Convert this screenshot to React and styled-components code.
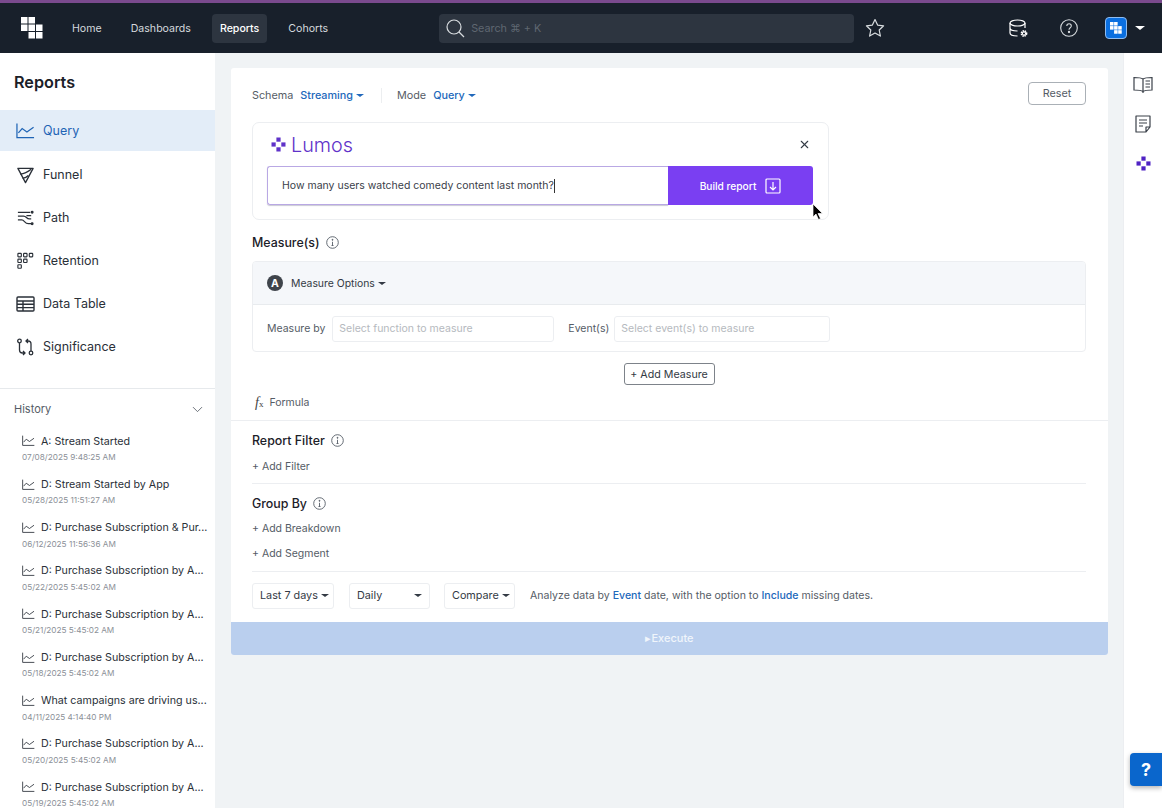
import React from 'react';
import styled, { createGlobalStyle } from 'styled-components';
import { ChevronDown, X } from 'lucide-react';

const GlobalStyle = createGlobalStyle`
  html, body { margin: 0; padding: 0; height: 100%; overflow: hidden; }
  body { font-family: Inter, "Liberation Sans", sans-serif; color: #1d2530; }
  * { box-sizing: border-box; }
`;

const history = [
  ['A: Stream Started', '07/08/2025 9:48:25 AM'],
  ['D: Stream Started by App', '05/28/2025 11:51:27 AM'],
  ['D: Purchase Subscription & Pur...', '06/12/2025 11:56:36 AM'],
  ['D: Purchase Subscription by A...', '05/22/2025 5:45:02 AM'],
  ['D: Purchase Subscription by A...', '05/21/2025 5:45:02 AM'],
  ['D: Purchase Subscription by A...', '05/18/2025 5:45:02 AM'],
  ['What campaigns are driving us...', '04/11/2025 4:14:40 PM'],
  ['D: Purchase Subscription by A...', '05/20/2025 5:45:02 AM'],
  ['D: Purchase Subscription by A...', '05/19/2025 5:45:02 AM'],
];

const Line = ({ size = 20 }) => (
  <svg width={size} height={size * 0.85} viewBox="0 0 20 17" fill="none" stroke="currentColor" strokeWidth="1.3">
    <path d="M1 1v15h18" />
    <path d="M2.5 11l4-4.5 5 3.5 7-5" />
  </svg>
);

const Funnel = () => (
  <svg width="20" height="20" viewBox="0 0 20 20" fill="none" stroke="currentColor" strokeWidth="1.4">
    <path d="M2 3h16l-8 15z" strokeLinejoin="round" />
    <path d="M4.5 9c4-.3 8-2.2 11.5-5M7 13.5c2.5-.5 4.5-1.5 6-3" />
  </svg>
);

const PathIcon = () => (
  <svg width="20" height="20" viewBox="0 0 20 20" fill="none" stroke="currentColor" strokeWidth="1.3">
    <path d="M2 4h13M2 8h6c3 0 3 3 6 3h2M2 12h4c3 0 3 4 7 4h3M11 7.5h5" />
    <circle cx="17" cy="4" r=".9" fill="currentColor" />
    <circle cx="17" cy="16" r=".9" fill="currentColor" />
  </svg>
);

const Retention = () => (
  <svg width="20" height="20" viewBox="0 0 20 20" fill="none" stroke="currentColor" strokeWidth="1.2">
    {[[2, 2], [8, 2], [14, 2], [2, 8], [8, 8], [2, 14]].map(([x, y]) => (
      <rect key={`${x}-${y}`} x={x} y={y} width="3.6" height="3.6" rx=".6" />
    ))}
  </svg>
);

const TableIcon = () => (
  <svg width="19" height="16" viewBox="0 0 19 16" fill="none" stroke="currentColor" strokeWidth="1.4">
    <rect x="1" y="1" width="17" height="14" rx="1" />
    <path d="M1 5h17M1 8.3h17M1 11.6h17M7 5v10" />
  </svg>
);

const Significance = () => (
  <svg width="18" height="20" viewBox="0 0 18 20" fill="none" stroke="currentColor" strokeWidth="1.3">
    <circle cx="3" cy="4" r="1.8" />
    <circle cx="14.5" cy="16" r="1.8" />
    <path d="M3 6v7c0 2 1 3 3 3h2M6.5 14l2 2-2 2M14.500 14V7c0-2-1-3-3-3h-2M11.500 2l-2 2 2 2" />
  </svg>
);

const Cubes = ({ color = '#fff', size = 22 }) => (
  <svg width={size} height={size} viewBox="0 0 22 22" fill={color}>
    <rect x="0" y="0" width="6.5" height="6.5" />
    <rect x="7.5" y="0" width="6.5" height="6.5" />
    <rect x="0" y="7.5" width="6.5" height="6.5" />
    <rect x="7.5" y="7.5" width="6.5" height="6.5" />
    <rect x="15" y="7.5" width="6.5" height="6.5" />
    <rect x="7.5" y="15" width="6.5" height="6.5" />
    <rect x="15" y="15" width="6.5" height="6.5" />
  </svg>
);

const LumosMark = ({ size = 15, color = '#5f32c9' }) => (
  <svg width={size} height={size} viewBox="0 0 15 15" fill={color}>
    <rect x="5.4" y="0.5" width="4.2" height="4.2" />
    <rect x="0.5" y="5.4" width="4.2" height="4.2" />
    <rect x="10.3" y="5.4" width="4.2" height="4.2" />
    <rect x="5.4" y="10.3" width="4.2" height="4.2" />
  </svg>
);

const Info = () => (
  <svg width="13" height="13" viewBox="0 0 13 13" fill="none" stroke="#555c66" strokeWidth=".9">
    <circle cx="6.5" cy="6.5" r="5.8" />
    <path d="M6.5 5.8v3.7M5.5 9.5h2" />
    <circle cx="6.5" cy="3.8" r=".5" fill="#555c66" />
  </svg>
);

const DataGear = () => (
  <svg width="19" height="19" viewBox="0 0 19 19" fill="none" stroke="#fff" strokeWidth="1.2">
    <ellipse cx="8.5" cy="4" rx="7.5" ry="3" />
    <path d="M1 4v10c0 1.7 3.4 3 7.5 3M16 4v5M1 9c0 1.7 3.4 3 7.5 3" />
    <circle cx="15" cy="14.5" r="2.6" strokeWidth="1.6" strokeDasharray="1.4 .7" />
    <circle cx="15" cy="14.5" r="1.6" strokeWidth="1.1" />
  </svg>
);

const Page = styled.div`
  position: relative;
  height: 808px;
  display: flex;
  flex-direction: column;
  background: #f0f3f5;
  overflow: hidden;
`;

const TopBar = styled.header`
  height: 53px;
  flex: none;
  display: flex;
  align-items: center;
  padding-left: 21px;
  background: #18202b;
  border-top: 3px solid #7a4a8e;
`;

const Nav = styled.nav`
  display: flex;
  align-items: center;
  margin-left: 21px;
  gap: 8px;
`;

const NavLink = styled.a`
  height: 29px;
  display: flex;
  align-items: center;
  padding: 0 8px;
  margin-right: ${(p) => p.$gap || 0}px;
  border-radius: 4px;
  font-size: 10.6px;
  font-weight: ${(p) => (p.$active ? 500 : 400)};
  color: ${(p) => (p.$active ? '#fff' : '#d4d8dd')};
  background: ${(p) => (p.$active ? '#2d3540' : 'transparent')};
`;

const Search = styled.div`
  width: 415px;
  height: 29px;
  margin-left: 103px;
  display: flex;
  align-items: center;
  gap: 6px;
  padding-left: 6px;
  background: #2d3540;
  border-radius: 4px;
  font-size: 10.8px;
  color: #5f6771;
`;

const StarWrap = styled.div`
  display: flex;
  margin-left: 11px;
`;

const TopRight = styled.div`
  margin-left: auto;
  display: flex;
  align-items: center;
  padding-right: 17px;
`;

const HelpRound = styled.svg`
  margin-left: 32px;
`;

const Avatar = styled.div`
  width: 22px;
  height: 22px;
  margin-left: 27px;
  display: flex;
  align-items: center;
  justify-content: center;
  background: #0a6fe0;
  border: 1px solid #8fbcf0;
  border-radius: 4px;
`;

const Caret = styled.span`
  display: inline-block;
  width: 0;
  height: 0;
  flex: none;
  margin-left: ${(p) => p.$ml ?? 3}px;
  border-left: ${(p) => p.$s || 4}px solid transparent;
  border-right: ${(p) => p.$s || 4}px solid transparent;
  border-top: ${(p) => (p.$s || 4) * 0.85}px solid ${(p) => p.$color || 'currentColor'};
`;

const Body = styled.div`
  flex: 1;
  min-height: 0;
  display: flex;
`;

const Sidebar = styled.aside`
  width: 215px;
  flex: none;
  background: #fff;
  overflow: hidden;
`;

const SideTitle = styled.h2`
  margin: 0;
  padding: 19px 0 0 14px;
  height: 57px;
  font-size: 16.2px;
  line-height: 20px;
  font-weight: 600;
  color: #1b2028;
`;

const SideMenu = styled.div`
  padding-bottom: 20px;
  border-bottom: 1px solid #e6e9ec;
`;

const SideItem = styled.div`
  height: ${(p) => (p.$active ? 41 : 43)}px;
  margin-bottom: ${(p) => (p.$active ? 2 : 0)}px;
  display: flex;
  align-items: center;
  gap: 8px;
  padding-left: 16px;
  font-size: 12.5px;
  color: ${(p) => (p.$active ? '#1f64b5' : '#2a3038')};
  background: ${(p) => (p.$active ? '#e3edf8' : 'transparent')};
  & > svg { width: 19px; flex: none; }
`;

const HistoryHead = styled.div`
  display: flex;
  justify-content: space-between;
  align-items: center;
  padding: 6px 9px 0 14px;
  height: 34px;
  font-size: 11px;
  color: #555c66;
`;

const HistoryList = styled.div`
  padding: 10px 0 0 22px;
`;

const HistoryItem = styled.div`
  height: 43.25px;
`;

const HistoryTitle = styled.div`
  display: flex;
  align-items: center;
  gap: 6px;
  height: 16px;
  font-size: 10.7px;
  white-space: nowrap;
  color: #2a3038;
`;

const HistoryDate = styled.div`
  margin-top: 3px;
  font-size: 8.2px;
  line-height: 11px;
  color: #8b9097;
`;

const Main = styled.main`
  flex: 1;
  min-width: 0;
  padding: 15px 15px 0 16px;
`;

const Card = styled.section`
  height: 587px;
  display: flex;
  flex-direction: column;
  background: #fff;
  border-radius: 3px;
`;

const CardInner = styled.div`
  padding: 0 22px 0 21px;
`;

const SchemaRow = styled.div`
  height: 54px;
  display: flex;
  align-items: center;
  font-size: 10.8px;
  color: #555c66;
`;

const SchemaValue = styled.span`
  display: inline-flex;
  align-items: center;
  margin-left: 7px;
  color: #2168bb;
  font-weight: 500;
`;

const SchemaSep = styled.span`
  width: 1px;
  height: 15px;
  margin: 0 15px 0 17px;
  background: #eceef0;
`;

const ResetButton = styled.button`
  margin-left: auto;
  margin-top: -3px;
  width: 58px;
  height: 23px;
  padding: 0;
  background: #fff;
  border: 1px solid #aab0b6;
  border-radius: 4px;
  font: 400 10.8px Inter, sans-serif;
  color: #555c66;
`;

const LumosBox = styled.div`
  width: 577px;
  height: 98px;
  padding: 0 15px 0 14px;
  border: 1px solid #eceef1;
  border-radius: 7px;
`;

const LumosHead = styled.div`
  height: 43px;
  display: flex;
  align-items: center;
  gap: 5px;
  padding-left: 4px;
`;

const LumosName = styled.span`
  font-size: 19.8px;
  font-weight: 300;
  color: #5f32c9;
`;

const CloseWrap = styled.span`
  margin-left: auto;
  margin-right: 2px;
  display: flex;
  color: #333a44;
`;

const PromptRow = styled.div`
  display: flex;
  height: 39px;
`;

const Prompt = styled.div`
  flex: 1;
  display: flex;
  align-items: center;
  padding-left: 14px;
  font-size: 10.5px;
  color: #3a4049;
  border: 1px solid #b9a8e4;
  border-right: 0;
  border-radius: 3px 0 0 3px;
  box-shadow: 0 1px 1px rgba(40, 40, 80, .25);
`;

const TextCaret = styled.span`
  width: 1px;
  height: 14px;
  background: #333;
`;

const BuildButton = styled.button`
  width: 145px;
  display: flex;
  align-items: center;
  justify-content: center;
  gap: 9px;
  padding: 0;
  background: #7a3ff2;
  border: 0;
  border-radius: 0 3px 3px 0;
  color: #fff;
  font: 500 10.2px Inter, sans-serif;
`;

const SectionTitle = styled.h3`
  margin: ${(p) => p.$mt || 0}px 0 0;
  display: flex;
  align-items: center;
  gap: 6px;
  height: 16px;
  font-size: 12.4px;
  font-weight: 500;
  color: #1b2028;
`;

const MeasureBox = styled.div`
  margin-top: 11px;
  height: 91px;
  border: 1px solid #eceef1;
  border-radius: 4px;
  overflow: hidden;
`;

const MeasureHead = styled.div`
  height: 43px;
  display: flex;
  align-items: center;
  padding-left: 14px;
  background: #f5f7fa;
  border-bottom: 1px solid #e8ebee;
  font-size: 10.4px;
  color: #333a44;
`;

const Badge = styled.span`
  width: 16px;
  height: 16px;
  margin-right: 8px;
  display: flex;
  align-items: center;
  justify-content: center;
  border-radius: 50%;
  background: #3f444b;
  color: #fff;
  font-size: 10.5px;
  font-weight: 700;
`;

const MeasureFields = styled.div`
  display: flex;
  align-items: center;
  height: 47px;
  padding: 0 14px;
  font-size: 10.5px;
  color: #555c66;
`;

const FieldBox = styled.div`
  width: ${(p) => p.$w}px;
  height: 26px;
  margin: 0 ${(p) => p.$mr || 0}px 0 ${(p) => p.$ml ?? 7}px;
  display: flex;
  align-items: center;
  padding-left: 6px;
  border: 1px solid #eceef1;
  border-radius: 3px;
  color: #b5b9be;
  font-size: 10.5px;
`;

const AddRow = styled.div`
  display: flex;
  justify-content: center;
  margin-top: 11px;
`;

const AddMeasure = styled.button`
  width: 91px;
  height: 22px;
  padding: 0;
  background: #fff;
  border: 1px solid #7d838a;
  border-radius: 3px;
  font: 400 10.7px Inter, sans-serif;
  color: #333a44;
`;

const FormulaRow = styled.div`
  height: 35px;
  display: flex;
  align-items: center;
  gap: 6px;
  padding-left: 3px;
  font-size: 10.5px;
  color: #555c66;
`;

const FxMark = styled.span`
  font-family: "Liberation Serif", serif;
  font-style: italic;
  font-size: 14px;
  color: #444;
  & > small { font-size: 9px; font-style: normal; }
`;

const FullRule = styled.div`
  height: 1px;
  background: #eceef1;
`;

const AddLink = styled.div`
  height: 25px;
  margin-top: ${(p) => p.$mt || 0}px;
  display: flex;
  align-items: center;
  font-size: 10.5px;
  color: #555c66;
`;

const Rule = styled.div`
  height: 1px;
  background: #eceef1;
  margin-top: ${(p) => p.$mt || 0}px;
`;

const Controls = styled.div`
  display: flex;
  align-items: center;
  margin-top: 10px;
  height: 27px;
`;

const Picker = styled.div`
  width: ${(p) => p.$w}px;
  height: 26px;
  margin-right: ${(p) => p.$mr}px;
  display: flex;
  align-items: center;
  justify-content: space-between;
  padding: 0 7px;
  border: 1px solid #eceef1;
  border-radius: 3px;
  font-size: 10.8px;
  white-space: nowrap;
  color: #333a44;
`;

const Note = styled.span`
  font-size: 10.55px;
  color: #555c66;
  white-space: nowrap;
`;

const NoteLink = styled.b`
  color: #2168bb;
  font-weight: 500;
`;

const Execute = styled.div`
  margin-top: auto;
  height: 33px;
  padding-bottom: 1px;
  display: flex;
  align-items: center;
  justify-content: center;
  background: #bacfee;
  border-radius: 0 0 3px 3px;
  color: #f0f5fb;
  font-size: 11px;
  font-weight: 500;
`;

const Rail = styled.aside`
  width: 39px;
  flex: none;
  display: flex;
  flex-direction: column;
  align-items: center;
  gap: 21px;
  padding-top: 23px;
  background: #fff;
  border-left: 1px solid #eceef1;
`;

const RailMark = styled.div`
  display: flex;
  margin-top: 2px;
`;

const HelpButton = styled.div`
  position: absolute;
  right: 0;
  bottom: 22px;
  width: 32px;
  height: 33px;
  display: flex;
  align-items: center;
  justify-content: center;
  background: #0a66cc;
  border-radius: 4px 0 0 4px;
  box-shadow: 0 2px 5px rgba(0, 0, 0, .3);
  color: #fff;
  font-size: 18px;
  font-weight: 700;
`;

const Pointer = styled.svg`
  position: absolute;
  left: 812px;
  top: 203px;
`;

const Report = () => (
  <Card>
    <CardInner>
      <SchemaRow>
        Schema
        <SchemaValue>Streaming<Caret /></SchemaValue>
        <SchemaSep />
        Mode
        <SchemaValue>Query<Caret /></SchemaValue>
        <ResetButton>Reset</ResetButton>
      </SchemaRow>
      <LumosBox>
        <LumosHead>
          <LumosMark />
          <LumosName>Lumos</LumosName>
          <CloseWrap><X size={13} /></CloseWrap>
        </LumosHead>
        <PromptRow>
          <Prompt>How many users watched comedy content last month?<TextCaret /></Prompt>
          <BuildButton>
            Build report
            <svg width="16" height="16" viewBox="0 0 16 16" fill="none" stroke="#fff" strokeWidth="1.2">
              <rect x="1" y="1" width="14" height="14" rx="1" />
              <path d="M8 4v8M5 9l3 3 3-3" />
            </svg>
          </BuildButton>
        </PromptRow>
      </LumosBox>
      <SectionTitle $mt={14}>Measure(s) <Info /></SectionTitle>
      <MeasureBox>
        <MeasureHead>
          <Badge>A</Badge>
          Measure Options<Caret />
        </MeasureHead>
        <MeasureFields>
          Measure by
          <FieldBox $w={222} $mr={14}>Select function to measure</FieldBox>
          Event(s)
          <FieldBox $w={216} $ml={5}>Select event(s) to measure</FieldBox>
        </MeasureFields>
      </MeasureBox>
      <AddRow><AddMeasure>+ Add Measure</AddMeasure></AddRow>
      <FormulaRow><FxMark>f<small>x</small></FxMark> Formula</FormulaRow>
    </CardInner>
    <FullRule />
    <CardInner>
      <SectionTitle $mt={11}>Report Filter <Info /></SectionTitle>
      <AddLink $mt={6}>+ Add Filter</AddLink>
      <Rule $mt={4} />
      <SectionTitle $mt={11}>Group By <Info /></SectionTitle>
      <AddLink $mt={5}>+ Add Breakdown</AddLink>
      <AddLink>+ Add Segment</AddLink>
      <Rule $mt={5} />
      <Controls>
        <Picker $w={82} $mr={15}>Last 7 days<Caret /></Picker>
        <Picker $w={81} $mr={14}>Daily<Caret /></Picker>
        <Picker $w={71} $mr={15}>Compare<Caret /></Picker>
        <Note>
          Analyze data by <NoteLink>Event</NoteLink> date, with the option to <NoteLink>Include</NoteLink> missing dates.
        </Note>
      </Controls>
    </CardInner>
    <Execute>▸Execute</Execute>
  </Card>
);

export default function App() {
  return (
    <Page>
      <GlobalStyle />
      <TopBar>
        <Cubes />
        <Nav>
          <NavLink $gap={5}>Home</NavLink>
          <NavLink $gap={5}>Dashboards</NavLink>
          <NavLink $active $gap={5}>Reports</NavLink>
          <NavLink>Cohorts</NavLink>
        </Nav>
        <Search>
          <svg width="20" height="20" viewBox="0 0 20 20" fill="none" stroke="#d8dcdf" strokeWidth="1.2">
            <circle cx="9" cy="9" r="7" />
            <path d="M14 14l5 5" />
          </svg>
          Search ⌘ + K
        </Search>
        <StarWrap>
          <svg width="20" height="20" viewBox="0 0 20 20" fill="none" stroke="#d8dcdf" strokeWidth="1.2" strokeLinejoin="round">
            <path d="M10 1.5l2.6 5.6 6 .7-4.4 4.2 1.2 6.1L10 15.1l-5.4 3 1.2-6.1L1.4 7.8l6-.7z" />
          </svg>
        </StarWrap>
        <TopRight>
          <DataGear />
          <HelpRound width="18" height="18" viewBox="0 0 18 18" fill="none" stroke="#d8dcdf" strokeWidth="1.1">
            <circle cx="9" cy="9" r="8.3" />
            <path d="M6.8 7c0-1.4 1-2.2 2.3-2.2S11.3 5.600 11.300 7c0 1.800-2.300 1.700-2.300 3.800" />
            <circle cx="9" cy="13" r=".6" fill="#d8dcdf" />
          </HelpRound>
          <Avatar><Cubes size={12} /></Avatar>
          <Caret $ml={8} $s={5} $color="#fff" />
        </TopRight>
      </TopBar>
      <Body>
        <Sidebar>
          <SideTitle>Reports</SideTitle>
          <SideMenu>
            <SideItem $active><Line /> Query</SideItem>
            <SideItem><Funnel /> Funnel</SideItem>
            <SideItem><PathIcon /> Path</SideItem>
            <SideItem><Retention /> Retention</SideItem>
            <SideItem><TableIcon /> Data Table</SideItem>
            <SideItem><Significance /> Significance</SideItem>
          </SideMenu>
          <HistoryHead>History <ChevronDown size={17} strokeWidth={1.2} /></HistoryHead>
          <HistoryList>
            {history.map(([title, date], i) => (
              <HistoryItem key={i}>
                <HistoryTitle><Line size={13} />{title}</HistoryTitle>
                <HistoryDate>{date}</HistoryDate>
              </HistoryItem>
            ))}
          </HistoryList>
        </Sidebar>
        <Main><Report /></Main>
        <Rail>
          <svg width="20" height="18" viewBox="0 0 20 18" fill="none" stroke="#3a4049" strokeWidth="1.2">
            <path d="M10 3C8 1.5 4 1.5 1 1.5V14c3 0 7 0 9 1.500 2-1.500 6-1.500 9-1.500V1.500c-3 0-7 0-9 1.500zM10 3v14M12.500 5H17M12.500 8H17M12.500 11H17" />
          </svg>
          <svg width="18" height="18" viewBox="0 0 18 18" fill="none" stroke="#3a4049" strokeWidth="1.2">
            <path d="M2 1h14v11l-4 5H2zM5 5h8M5 8h8M5 11h4M16 12h-4v5" strokeLinejoin="round" />
          </svg>
          <RailMark><LumosMark size={15} color="#4f22c4" /></RailMark>
        </Rail>
      </Body>
      <HelpButton>?</HelpButton>
      <Pointer width="12" height="18" viewBox="0 0 12 18">
        <path d="M1 1v13l3-3 2.500 5.500 2-1-2.500-5h4.500z" fill="#000" stroke="#fff" strokeWidth=".7" />
      </Pointer>
    </Page>
  );
}
